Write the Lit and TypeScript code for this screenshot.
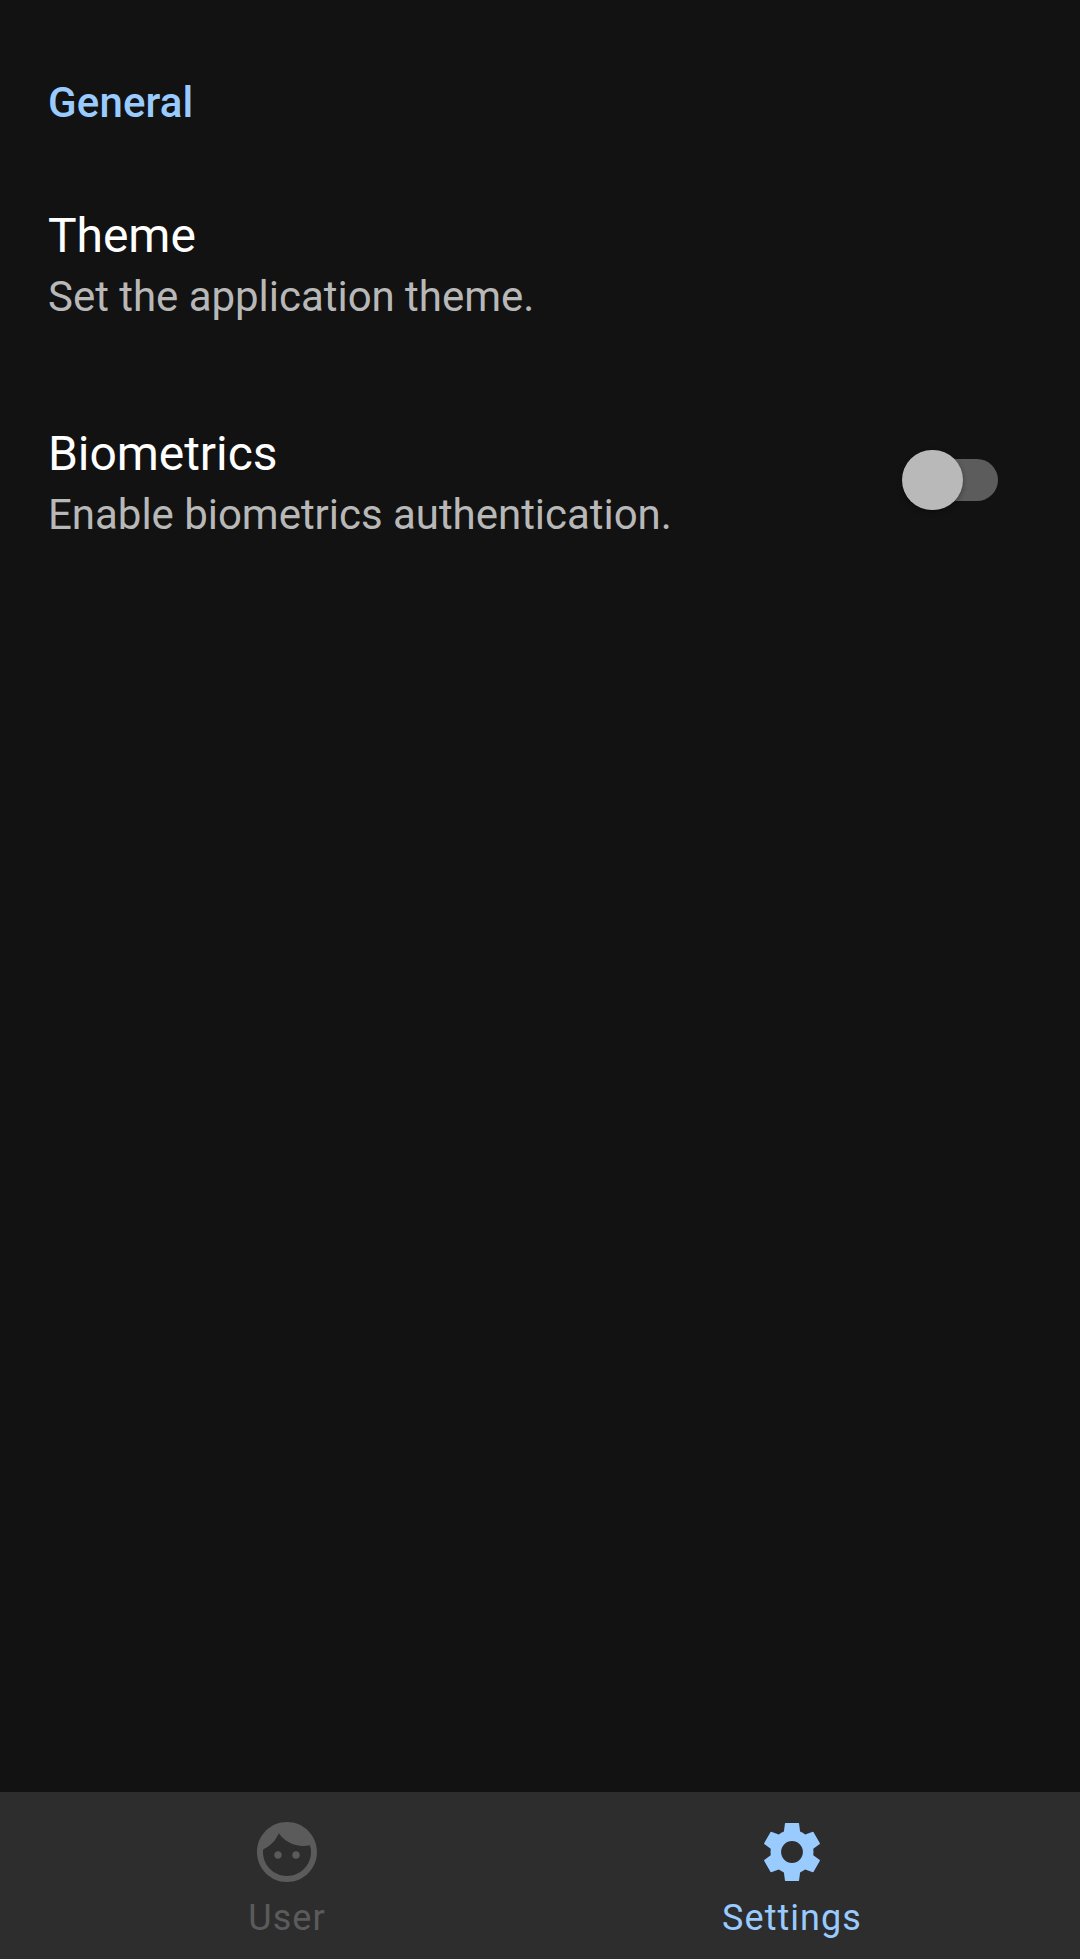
import { LitElement, html, css, svg } from "lit";
import { customElement, property } from "lit/decorators.js";

const FACE =
  "M9 11.75c-.69 0-1.25.56-1.25 1.25s.56 1.25 1.25 1.25 1.25-.56 1.25-1.25-.56-1.25-1.25-1.25zm6 0c-.69 0-1.25.56-1.25 1.25s.56 1.25 1.25 1.25 1.25-.56 1.25-1.25-.56-1.25-1.25-1.25zM12 2C6.48 2 2 6.48 2 12s4.48 10 10 10 10-4.48 10-10S17.52 2 12 2zm0 18c-4.41 0-8-3.59-8-8 0-.29.02-.58.05-.86 2.36-1.05 4.23-2.98 5.21-5.37C11.07 8.33 14.05 10 17.42 10c.78 0 1.53-.09 2.25-.26.21.71.33 1.47.33 2.26 0 4.41-3.59 8-8 8z";
const GEAR =
  "M9.8 2.35H14.2L14.35 2.5 14.7 5.2Q15.6 5.55 16.4 6.15L18.9 5.25 19.15 5.35 21.3 9.05 21.25 9.3 19.1 10.95Q19.2 12 19.1 13.05L21.25 14.7 21.3 14.95 19.15 18.65 18.9 18.75 16.4 17.85Q15.6 18.45 14.7 18.8L14.35 21.5 14.2 21.65H9.8L9.65 21.5 9.3 18.8Q8.4 18.45 7.6 17.85L5.1 18.75 4.85 18.65 2.7 14.95 2.75 14.7 4.9 13.05Q4.8 12 4.9 10.95L2.75 9.3 2.7 9.05 4.85 5.35 5.1 5.25 7.6 6.15Q8.4 5.55 9.3 5.2L9.65 2.5ZM12 8.37a3.63 3.63 0 1 0 0 7.26a3.63 3.63 0 1 0 0-7.26Z";

@customElement("setting-switch")
export class SettingSwitch extends LitElement {
  static styles = css`
    :host {
      display: block;
      margin-bottom: 6px;
    }
    .track {
      display: flex;
      align-items: center;
      width: 81px;
      height: 42px;
      margin-left: 15px;
      border-radius: 21px;
      background: #5c5c5c;
    }
    .thumb {
      flex: none;
      width: 60.5px;
      height: 60.5px;
      margin-left: -14.8px;
      border-radius: 50%;
      background: #b9b9b9;
      box-shadow: 0 2px 5px rgba(0, 0, 0, 0.35);
    }
  `;
  render() {
    return html`<div class="track" role="switch" aria-checked="false"><div class="thumb"></div></div>`;
  }
}

@customElement("setting-row")
export class SettingRow extends LitElement {
  @property() heading = "";
  @property() detail = "";
  static styles = css`
    :host {
      display: flex;
      align-items: center;
      justify-content: space-between;
      height: 122px;
    }
    .heading {
      font-size: 48px;
      line-height: 64px;
      letter-spacing: -0.06px;
      color: #fff;
    }
    .detail {
      font-size: 42px;
      line-height: 58px;
      letter-spacing: -0.03px;
      color: #b8b8b8;
    }
  `;
  render() {
    return html`<div>
        <div class="heading">${this.heading}</div>
        <div class="detail">${this.detail}</div>
      </div>
      <slot></slot>`;
  }
}

@customElement("nav-tab")
export class NavTab extends LitElement {
  @property() label = "";
  @property() icon = "";
  static styles = css`
    :host {
      display: flex;
      flex-direction: column;
      align-items: center;
      width: 505px;
      padding-top: 24px;
      box-sizing: border-box;
    }
    .icon {
      width: 72px;
      height: 72px;
      fill: currentColor;
    }
    .label {
      margin-top: 8px;
      font-size: 36px;
      line-height: 44px;
      letter-spacing: 1.05px;
    }
  `;
  render() {
    return html`<svg class="icon" viewBox="0 0 24 24">${svg`<path fill-rule="evenodd" d=${this.icon}></path>`}</svg>
      <div class="label">${this.label}</div>`;
  }
}

@customElement("app-root")
export class AppRoot extends LitElement {
  static styles = css`
    :host {
      display: flex;
      flex-direction: column;
      height: 1959px;
      background: #121212;
      font-family: Roboto, "Liberation Sans", sans-serif;
    }
    .content {
      flex: 1;
      padding: 74px 82px 0 48px;
    }
    .section {
      margin-bottom: 73px;
      font-size: 42px;
      line-height: 57px;
      font-weight: 500;
      letter-spacing: 0.15px;
      color: #99cbff;
    }
    .rows {
      display: flex;
      flex-direction: column;
      gap: 96px;
    }
    .nav {
      display: flex;
      justify-content: center;
      box-sizing: border-box;
      height: 167px;
      padding-right: 1px;
      background: #2d2d2d;
    }
    .idle {
      color: #5b5b5c;
    }
    .active {
      color: #99cbff;
    }
  `;
  render() {
    return html`
      <main class="content">
        <div class="section">General</div>
        <div class="rows">
          <setting-row heading="Theme" detail="Set the application theme."></setting-row>
          <setting-row heading="Biometrics" detail="Enable biometrics authentication.">
            <setting-switch></setting-switch>
          </setting-row>
        </div>
      </main>
      <nav class="nav">
        <nav-tab class="idle" label="User" .icon=${FACE}></nav-tab>
        <nav-tab class="active" label="Settings" .icon=${GEAR}></nav-tab>
      </nav>
    `;
  }
}
